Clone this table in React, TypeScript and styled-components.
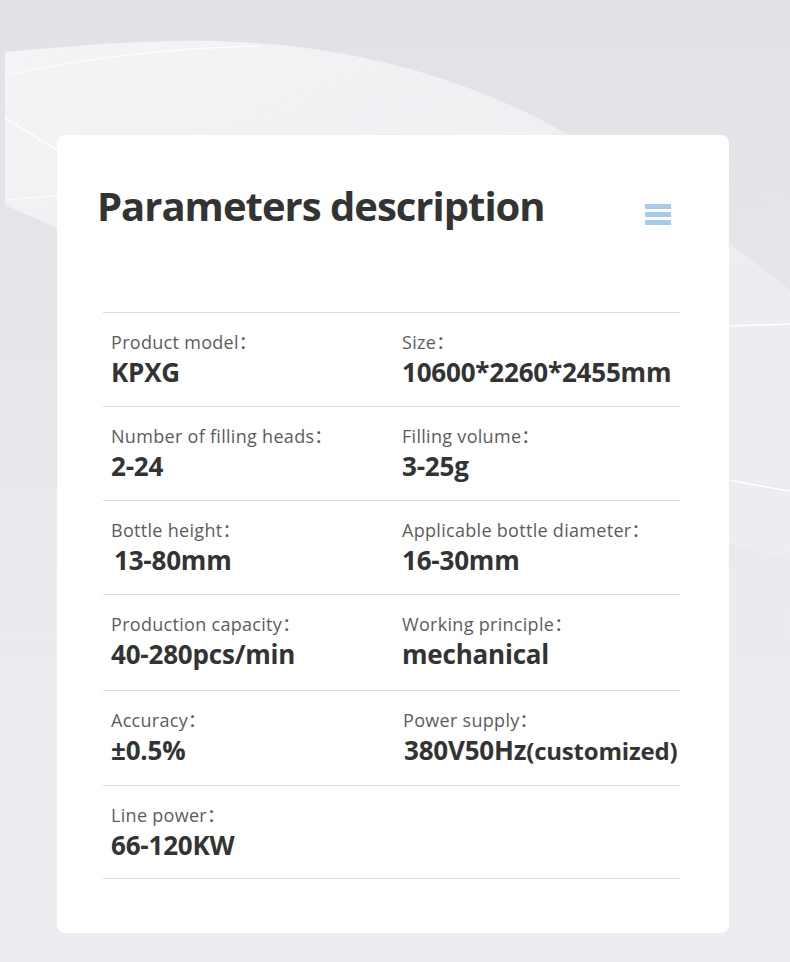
import React from "react";
import styled, { createGlobalStyle } from "styled-components";

const GlobalStyle = createGlobalStyle`
  html, body { margin: 0; padding: 0; }
  body {
    background: #eaebef;
    font-family: "Open Sans", "Noto Sans", "Noto Sans CJK SC", sans-serif;
  }
`;

const Page = styled.div`
  position: relative;
  width: 790px;
  height: 962px;
  overflow: hidden;
  background: linear-gradient(180deg, #e1e2e6 0%, #e5e6ea 30%, #eaebef 60%, #ecedf1 100%);
  padding: 135px 0 0 57px;
  box-sizing: border-box;
`;

const Backdrop = styled.svg`
  position: absolute;
  inset: 0;
  width: 790px;
  height: 962px;
  pointer-events: none;
`;

const Card = styled.section`
  position: relative;
  width: 672px;
  height: 798px;
  background: #ffffff;
  border-radius: 8px;
  box-sizing: border-box;
  padding: 0 49px 0 46px;
  display: flex;
  flex-direction: column;
`;

const Header = styled.header`
  display: flex;
  justify-content: space-between;
  align-items: flex-start;
  height: 177px;
  padding: 44px 9px 0 0;
  box-sizing: border-box;
`;

const Title = styled.h1`
  margin: 0 0 0 -6px;
  font-size: 40px;
  line-height: 54px;
  font-weight: 700;
  color: #333333;
  letter-spacing: -1px;
`;

const MenuIcon = styled.div`
  display: flex;
  flex-direction: column;
  gap: 3.5px;
  width: 26px;
  margin-top: 25px;
`;

const MenuBar = styled.span`
  display: block;
  height: 4.5px;
  background: #a9cbe9;
`;

const Table = styled.div`
  border-bottom: 1px solid #dedede;
`;

const Row = styled.div<{ $h: number }>`
  display: grid;
  grid-template-columns: 291px 1fr;
  height: ${(p) => p.$h}px;
  box-sizing: border-box;
  border-top: 1px solid #dedede;
  padding: 16px 0 0 8px;
`;

const Cell = styled.div<{ $dx?: number }>`
  display: flex;
  flex-direction: column;
  padding-left: ${(p) => p.$dx ?? 0}px;
`;

const Label = styled.div`
  font-size: 18px;
  line-height: 26px;
  color: #5c5c5c;
  white-space: nowrap;
  letter-spacing: 0.3px;
`;

const Value = styled.div<{ $vx?: number }>`
  font-size: 26px;
  line-height: 34px;
  font-weight: 700;
  color: #333333;
  white-space: nowrap;
  padding-left: ${(p) => p.$vx ?? 0}px;
  letter-spacing: -0.2px;
`;

const Small = styled.span`
  font-size: 24px;
`;

type Item = { label: string; value: React.ReactNode; dx?: number; vx?: number };

const rows: { h: number; items: Item[] }[] = [
  {
    h: 94,
    items: [
      { label: "Product model", value: "KPXG" },
      { label: "Size", value: "10600*2260*2455mm" },
    ],
  },
  {
    h: 94,
    items: [
      { label: "Number of filling heads", value: "2-24" },
      { label: "Filling volume", value: "3-25g" },
    ],
  },
  {
    h: 94,
    items: [
      { label: "Bottle height", value: "13-80mm", vx: 3 },
      { label: "Applicable bottle diameter", value: "16-30mm" },
    ],
  },
  {
    h: 96,
    items: [
      { label: "Production capacity", value: "40-280pcs/min", vx: -1 },
      { label: "Working principle", value: "mechanical" },
    ],
  },
  {
    h: 95,
    items: [
      { label: "Accuracy", value: "±0.5%" },
      {
        label: "Power supply",
        value: (
          <>
            380V50Hz<Small>(customized)</Small>
          </>
        ),
        dx: 1,
        vx: 1,
      },
    ],
  },
  {
    h: 93,
    items: [{ label: "Line power", value: "66-120KW", vx: -1 }],
  },
];

export default function App() {
  return (
    <>
      <GlobalStyle />
      <Page>
        <Backdrop viewBox="0 0 790 962" aria-hidden="true">
          <defs>
            <linearGradient id="wave" x1="0" y1="0" x2="0.6" y2="1">
              <stop offset="0" stopColor="#f4f5f7" stopOpacity="0.95" />
              <stop offset="0.5" stopColor="#f0f1f3" stopOpacity="0.85" />
              <stop offset="1" stopColor="#eeeff2" stopOpacity="0.6" />
            </linearGradient>
          </defs>
          <path
            d="M5 52 C 90 44, 170 38, 240 42 C 360 48, 470 80, 560 130 C 640 175, 720 235, 790 290 L 790 560 C 600 520, 300 330, 5 205 Z"
            fill="url(#wave)"
          />
          <path
            d="M5 75 C 80 60, 160 48, 260 46"
            stroke="#ffffff"
            strokeOpacity="0.7"
            strokeWidth="1.5"
            fill="none"
          />
          <path
            d="M5 118 L 57 150"
            stroke="#ffffff"
            strokeOpacity="0.8"
            strokeWidth="1.5"
            fill="none"
          />
          <path
            d="M5 200 C 25 198, 40 197, 57 196"
            stroke="#ffffff"
            strokeOpacity="0.8"
            strokeWidth="1.2"
            fill="none"
          />
          <path
            d="M729 326 L 790 324"
            stroke="#ffffff"
            strokeWidth="1.5"
            fill="none"
          />
          <path
            d="M729 480 C 750 484, 770 488, 790 491"
            stroke="#ffffff"
            strokeWidth="1.5"
            fill="none"
          />
        </Backdrop>
        <Card>
          <Header>
            <Title>Parameters description</Title>
            <MenuIcon aria-label="menu">
              <MenuBar />
              <MenuBar />
              <MenuBar />
            </MenuIcon>
          </Header>
          <Table>
            {rows.map((r, i) => (
              <Row key={i} $h={r.h}>
                {r.items.map((it) => (
                  <Cell key={it.label} $dx={it.dx}>
                    <Label>{it.label}：</Label>
                    <Value $vx={it.vx}>{it.value}</Value>
                  </Cell>
                ))}
              </Row>
            ))}
          </Table>
        </Card>
      </Page>
    </>
  );
}
